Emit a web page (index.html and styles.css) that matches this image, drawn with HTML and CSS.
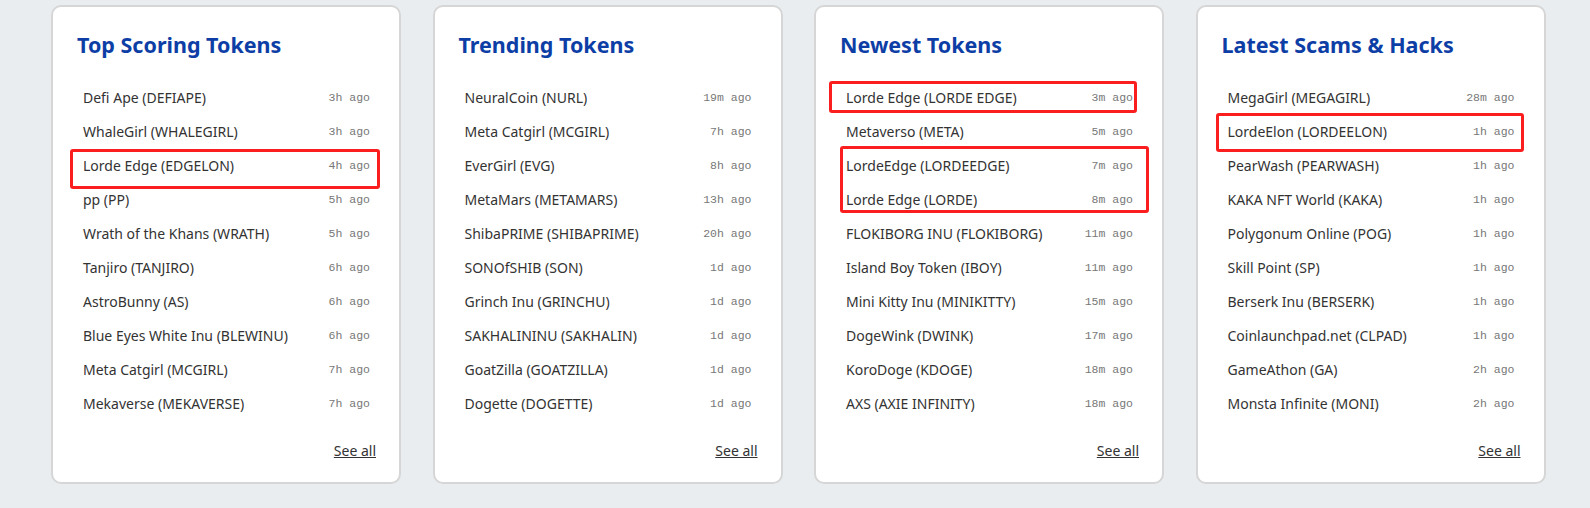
FILE: index.html
```html
<!DOCTYPE html>
<html lang="en">
<head>
  <meta charset="UTF-8" />
  <title>Token Lists</title>
  <link rel="stylesheet" href="styles.css">
</head>
<body>
  <div class="boards">
    <div class="card">
      <h2>Top Scoring Tokens</h2>
      <ul class="list">
        <li><span>Defi Ape (DEFIAPE)</span><span class="ago">3h ago</span></li>
        <li><span>WhaleGirl (WHALEGIRL)</span><span class="ago">3h ago</span></li>
        <li><span>Lorde Edge (EDGELON)</span><span class="ago">4h ago</span></li>
        <li><span>pp (PP)</span><span class="ago">5h ago</span></li>
        <li><span>Wrath of the Khans (WRATH)</span><span class="ago">5h ago</span></li>
        <li><span>Tanjiro (TANJIRO)</span><span class="ago">6h ago</span></li>
        <li><span>AstroBunny (AS)</span><span class="ago">6h ago</span></li>
        <li><span>Blue Eyes White Inu (BLEWINU)</span><span class="ago">6h ago</span></li>
        <li><span>Meta Catgirl (MCGIRL)</span><span class="ago">7h ago</span></li>
        <li><span>Mekaverse (MEKAVERSE)</span><span class="ago">7h ago</span></li>
      </ul>
      <div class="more"><a href="#">See all</a></div>
      <div class="mark mark-a"></div>
    </div>

    <div class="card">
      <h2>Trending Tokens</h2>
      <ul class="list">
        <li><span>NeuralCoin (NURL)</span><span class="ago">19m ago</span></li>
        <li><span>Meta Catgirl (MCGIRL)</span><span class="ago">7h ago</span></li>
        <li><span>EverGirl (EVG)</span><span class="ago">8h ago</span></li>
        <li><span>MetaMars (METAMARS)</span><span class="ago">13h ago</span></li>
        <li><span>ShibaPRIME (SHIBAPRIME)</span><span class="ago">20h ago</span></li>
        <li><span>SONOfSHIB (SON)</span><span class="ago">1d ago</span></li>
        <li><span>Grinch Inu (GRINCHU)</span><span class="ago">1d ago</span></li>
        <li><span>SAKHALININU (SAKHALIN)</span><span class="ago">1d ago</span></li>
        <li><span>GoatZilla (GOATZILLA)</span><span class="ago">1d ago</span></li>
        <li><span>Dogette (DOGETTE)</span><span class="ago">1d ago</span></li>
      </ul>
      <div class="more"><a href="#">See all</a></div>
    </div>

    <div class="card">
      <h2>Newest Tokens</h2>
      <ul class="list">
        <li><span>Lorde Edge (LORDE EDGE)</span><span class="ago">3m ago</span></li>
        <li><span>Metaverso (META)</span><span class="ago">5m ago</span></li>
        <li><span>LordeEdge (LORDEEDGE)</span><span class="ago">7m ago</span></li>
        <li><span>Lorde Edge (LORDE)</span><span class="ago">8m ago</span></li>
        <li><span>FLOKIBORG INU (FLOKIBORG)</span><span class="ago">11m ago</span></li>
        <li><span>Island Boy Token (IBOY)</span><span class="ago">11m ago</span></li>
        <li><span>Mini Kitty Inu (MINIKITTY)</span><span class="ago">15m ago</span></li>
        <li><span>DogeWink (DWINK)</span><span class="ago">17m ago</span></li>
        <li><span>KoroDoge (KDOGE)</span><span class="ago">18m ago</span></li>
        <li><span>AXS (AXIE INFINITY)</span><span class="ago">18m ago</span></li>
      </ul>
      <div class="more"><a href="#">See all</a></div>
      <div class="mark mark-b"></div>
      <div class="mark mark-c"></div>
    </div>

    <div class="card">
      <h2>Latest Scams &amp; Hacks</h2>
      <ul class="list">
        <li><span>MegaGirl (MEGAGIRL)</span><span class="ago">28m ago</span></li>
        <li><span>LordeElon (LORDEELON)</span><span class="ago">1h ago</span></li>
        <li><span>PearWash (PEARWASH)</span><span class="ago">1h ago</span></li>
        <li><span>KAKA NFT World (KAKA)</span><span class="ago">1h ago</span></li>
        <li><span>Polygonum Online (POG)</span><span class="ago">1h ago</span></li>
        <li><span>Skill Point (SP)</span><span class="ago">1h ago</span></li>
        <li><span>Berserk Inu (BERSERK)</span><span class="ago">1h ago</span></li>
        <li><span>Coinlaunchpad.net (CLPAD)</span><span class="ago">1h ago</span></li>
        <li><span>GameAthon (GA)</span><span class="ago">2h ago</span></li>
        <li><span>Monsta Infinite (MONI)</span><span class="ago">2h ago</span></li>
      </ul>
      <div class="more"><a href="#">See all</a></div>
      <div class="mark mark-d"></div>
    </div>
  </div>
</body>
</html>
```

FILE: styles.css
```css
body {
  margin: 0;
  background: #e9edf0;
  font-family: 'Noto Sans', 'Open Sans', sans-serif;
  color: #333;
}
.boards {
  display: grid;
  grid-template-columns: repeat(4, 350px);
  column-gap: 31.5px;
  padding: 5px 0 0 51px;
}
.card {
  position: relative;
  box-sizing: border-box;
  height: 479px;
  background: #fff;
  border: 2px solid #d6d6d6;
  border-radius: 10px;
  padding: 23px 29px 0 24px;
  display: flex;
  flex-direction: column;
}
h2 {
  margin: 0 0 20px;
  font-size: 21.5px;
  font-weight: 700;
  color: #0d3ea6;
  line-height: 30px;
}
.list {
  list-style: none;
  margin: 0;
  padding: 0 0 0 6px;
}
.list li {
  display: flex;
  justify-content: space-between;
  align-items: center;
  height: 34px;
  font-size: 14px;
  color: #333;
}
.ago {
  font-family: 'Liberation Mono', monospace;
  font-size: 11.5px;
  color: #777;
}
.more {
  margin-top: 19px;
  text-align: right;
  margin-right: -6px;
}
.more a {
  font-size: 14px;
  color: #333;
  text-decoration: underline;
}
.mark {
  position: absolute;
  box-sizing: border-box;
  border: 3px solid #fb1e1e;
  border-radius: 3px;
}
.mark-a { left: 17px; top: 142px; width: 310px; height: 40px; }
.mark-b { left: 13px; top: 74px; width: 308px; height: 32px; }
.mark-c { left: 24px; top: 139px; width: 309px; height: 67px; }
.mark-d { left: 18px; top: 106px; width: 308px; height: 39px; }
```
